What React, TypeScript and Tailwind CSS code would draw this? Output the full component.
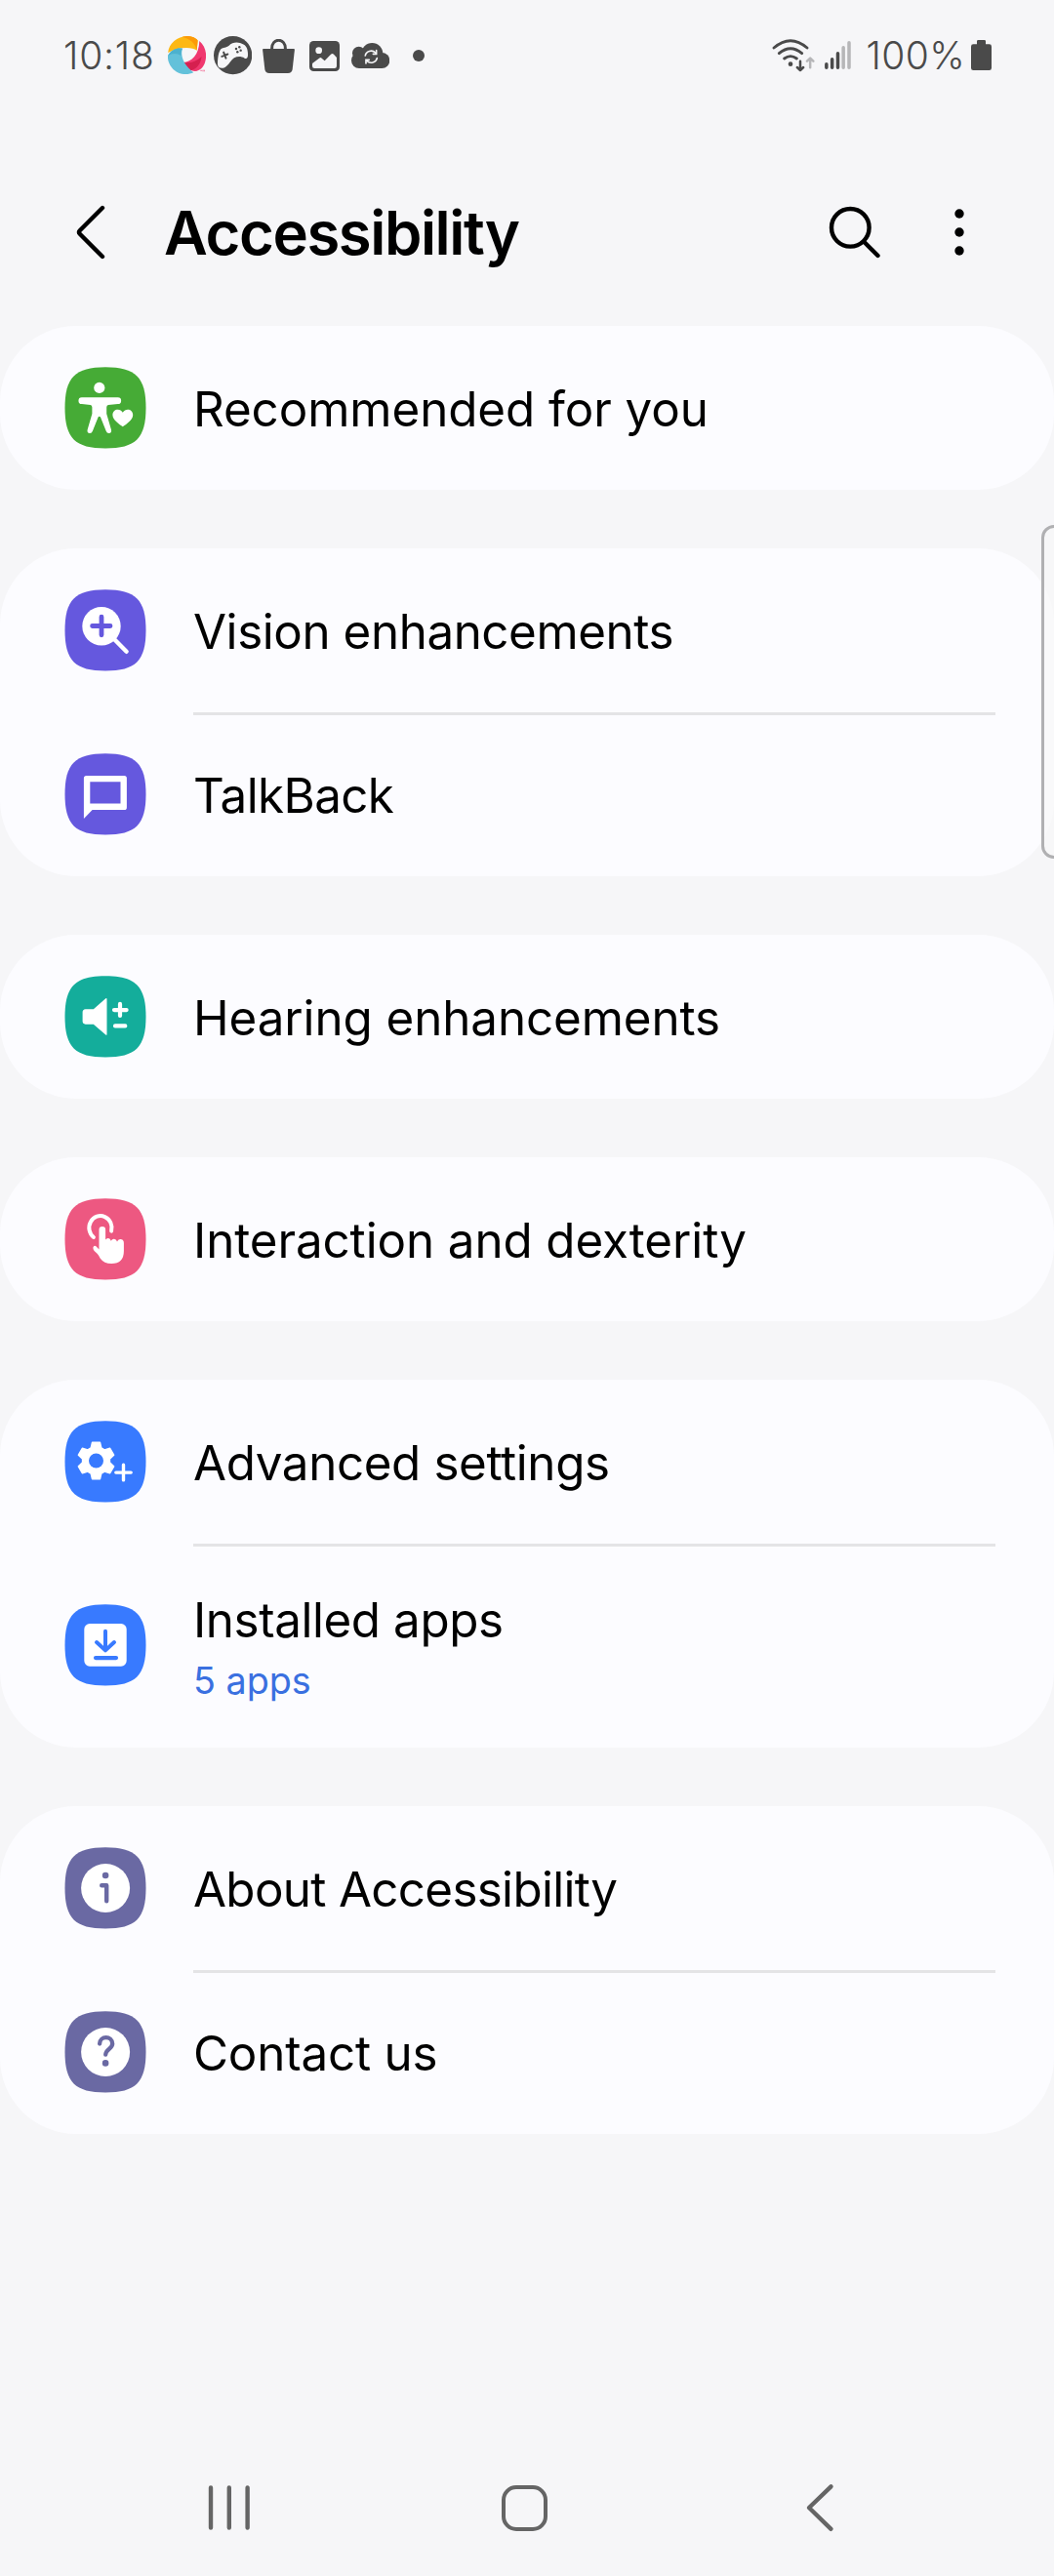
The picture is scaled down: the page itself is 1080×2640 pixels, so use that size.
import React from "react";
import type { ReactNode } from "react";

const BG = "#f6f6f8";
const INK = "#4a4a4a";

type Item = { label: string; tracking: string; color: string; glyph: ReactNode; sub?: string };

function gearPath(cx: number, cy: number) {
  const pts: string[] = [];
  for (let i = 0; i < 6; i++) {
    for (const [a, r] of [[-22, 14], [-12, 19], [12, 19], [22, 14]]) {
      const t = ((i * 60 + a - 90) * Math.PI) / 180;
      pts.push(`${(cx + r * Math.cos(t)).toFixed(2)} ${(cy + r * Math.sin(t)).toFixed(2)}`);
    }
  }
  return `M${pts.join("L")}Z`;
}

function Tile({ color, children }: { color: string; children: ReactNode }) {
  return (
    <svg viewBox="0 0 84 84" className="h-[84px] w-[84px] shrink-0" fill="none" strokeLinecap="round" strokeLinejoin="round">
      <path d="M42 .3C73 .3 83.5 11 83.5 42S73 83.5 42 83.5 .5 73 .5 42 11 .3 42 .3Z" fill={color} />
      {children}
    </svg>
  );
}

const recommended = (
  <g fill="#fff">
    <circle cx="35.8" cy="21.4" r="5.6" />
    <path d="M17.8 31.3H54.8a3.35 3.35 0 0 1 0 6.7L45 38.9Q43.2 39.3 43.2 41.5V48L48 64.4Q48.6 67.8 45.7 68.1Q43.6 68.2 42.7 65.8L37 51.6Q35.8 50 34.6 51.6L28.9 65.8Q28 68.2 25.9 68.1Q23 67.8 23.6 64.4L28.4 48V41.5Q28.4 39.3 26.6 38.9L17.8 38a3.35 3.35 0 0 1 0-6.7Z" />
    <path d="M59.8 61.3C56.5 59 49.4 54.5 49.4 49.3C49.4 43 57 41.8 59.8 46.8C62.6 41.8 70.2 43 70.2 49.3C70.2 54.5 63.1 59 59.8 61.3Z" />
  </g>
);
const vision = (
  <>
    <circle cx="38" cy="37.7" r="19.7" fill="#fff" />
    <path d="M28.6 37.5H47M38 28.2V46.8" stroke="#6558de" strokeWidth="4.8" />
    <path d="M50 50L63.6 63.8" stroke="#fff" strokeWidth="4.4" />
  </>
);
const talkback = (
  <path fillRule="evenodd" fill="#fff" d="M22.5 23H61.3Q63.9 23 63.9 25.6V55.4Q63.9 58 61.3 58H28.6L19.9 67V25.6Q19.9 23 22.5 23ZM26.3 29.3V51.4H57.5V29.3Z" />
);
const hearing = (
  <>
    <path fill="#fff" d="M21.6 34.3H29.8L42.3 23.3Q43.5 22.5 43.5 24V60Q43.5 61.4 42.3 60.5L29.8 49.7H21.6Q18.6 49.5 18.6 46.6V37.4Q18.6 34.5 21.6 34.3Z" />
    <path d="M51 35.1H63.6M57 28.9V41M52 51.4H62.3" stroke="#fff" strokeWidth="4.2" />
  </>
);
const interaction = (
  <>
    <path d="M29.9 40A11.6 12.2 0 1 1 48.1 33.6" stroke="#fff" strokeWidth="4" />
    <path fill="#fff" d="M35.5 32.2a3.3 3.3 0 0 1 6.6 0V42.6Q43.2 40.9 45 41.1Q47 41.4 47.7 43.8Q49 41.6 51 41.8Q53.2 42.1 54 44.4Q55.3 41.9 57.7 42.1Q60.9 42.5 60.9 46V54Q60.9 67 48.2 67Q40.5 67 36.6 61.5C35 57.8 32.8 55.8 30.6 54Q28.9 51.6 29.6 49.9Q30.7 48.2 32.4 49.3L35.5 52.6Z" />
  </>
);
const advanced = (
  <>
    <path fillRule="evenodd" fill="#fff" stroke="#fff" strokeWidth="1.6" d={gearPath(32.5, 41)} />
    <circle cx="32.5" cy="41" r="7.5" fill="#387aff" />
    <path d="M52.8 53.1H68.2M60.5 45.3V60.9" stroke="#fff" strokeWidth="3.4" />
  </>
);
const installed = (
  <>
    <rect x="20.3" y="20.1" width="43.4" height="43.6" rx="5.6" fill="#fff" />
    <path d="M42 27.8V46M33 39L42 47.4L51 39" stroke="#387aff" strokeWidth="4" />
    <path d="M32 55.1H53" stroke="#387aff" strokeWidth="4.2" />
  </>
);
const about = (
  <>
    <circle cx="42.1" cy="42" r="25" fill="#fff" />
    <circle cx="42.1" cy="29" r="3.3" fill="#6a69a3" />
    <path d="M38.2 39.2H43.2V55.2" stroke="#6a69a3" strokeWidth="4.4" />
  </>
);
const contact = (
  <>
    <circle cx="42.1" cy="42" r="25" fill="#fff" />
    <path d="M36.1 33.6C36.1 25 49.2 25 49.2 33.6C49.2 38.6 42.5 39.2 42.2 44.6" stroke="#6a69a3" strokeWidth="4.3" />
    <circle cx="42.1" cy="53.4" r="3.3" fill="#6a69a3" />
  </>
);

const groups: Item[][] = [
  [{ label: "Recommended for you", tracking: "tracking-[-0.06px]", color: "#46ab36", glyph: recommended }],
  [
    { label: "Vision enhancements", tracking: "tracking-[-0.41px]", color: "#6558de", glyph: vision },
    { label: "TalkBack", tracking: "tracking-[-0.6px]", color: "#6558de", glyph: talkback },
  ],
  [{ label: "Hearing enhancements", tracking: "tracking-[-0.07px]", color: "#14ad9b", glyph: hearing }],
  [{ label: "Interaction and dexterity", tracking: "tracking-[-0.08px]", color: "#ed5881", glyph: interaction }],
  [
    { label: "Advanced settings", tracking: "tracking-[-0.36px]", color: "#387aff", glyph: advanced },
    { label: "Installed apps", tracking: "tracking-[-0.4px]", color: "#387aff", glyph: installed, sub: "5 apps" },
  ],
  [
    { label: "About Accessibility", tracking: "tracking-[-0.66px]", color: "#6a69a3", glyph: about },
    { label: "Contact us", tracking: "tracking-[-0.16px]", color: "#6a69a3", glyph: contact },
  ],
];

function Row({ item }: { item: Item }) {
  return (
    <div className={`flex items-center pl-[66px] ${item.sub ? "h-[209px] pb-px" : "h-[168px]"}`}>
      <Tile color={item.color}>{item.glyph}</Tile>
      <div className={`ml-[48px] ${item.sub ? "pt-[3px]" : "pt-[2px]"}`}>
        <div className={`text-[49.3px] leading-[68px] whitespace-nowrap text-black ${item.tracking}`}>{item.label}</div>
        {item.sub && <div className="text-[37.7px] leading-[56px] text-[#3a70e0]">{item.sub}</div>}
      </div>
    </div>
  );
}

function StatusBar() {
  return (
    <div className="flex h-[114px] items-center justify-between pr-[64px] pl-[65px] text-[39px] text-[#4a4a4a]">
      <div className="flex items-center">
        <span className="w-[107px] font-[350] tracking-[0.8px] whitespace-nowrap">10:18</span>
        <svg viewBox="396 53 118 118" className="h-[39.3px] w-[39.3px]">
          <path fill="#fdb813" d="M396.500 104C399 75 425 53.500 455 53.500C470 53.500 482 58 488 66L485 97C470 85 430 85 396.500 104Z" />
          <path fill="#fc9a08" d="M440 55C462 50 482 57 488 67L485 97C482 76 464 61 440 55Z" />
          <path fill="#f0386f" d="M493 68C512 84 518 110 510 135C505 149 495 160 480 161C465 160 450 150 443 134C470 132 492 110 493 68Z" />
          <path fill="#d5204f" d="M443 134C463 138 483 132 500 116C497 138 487 152 467 159C456 152 447 144 443 134Z" />
          <path fill="#63c1da" d="M396 114C404 95 425 88 441 91C433 112 445 143 475 165C455 175 425 172 408 150C399 138 395 126 396 114Z" />
          <path fill="#4cb1ce" d="M396 114C404 95 425 88 441 91C437 98 436 106 437 114C424 104 409 105 396 114Z" />
          <path d="M496 159h5M504 157v5M508 157v5" stroke="#f0386f" strokeWidth="2" />
        </svg>
        <svg viewBox="537 53 118 118" className="ml-[7.7px] h-[39.3px] w-[39.3px]">
          <circle cx="596" cy="112" r="59" fill={INK} />
          <path fill={BG} d="M549 140C549 120 552 101 559 93C566 86 575 90 584 82C592 74 605 70 618 74C634 79 641 86 642 105C643 119 640 125 632 121C622 115 610 115 600 120C590 126 585 141 572 149C561 154 550 152 549 140Z" />
          <path d="M562 115.500L580 108.500M567.500 103L574.500 121" stroke={INK} strokeWidth="6" strokeLinecap="round" />
          <g fill={INK}><circle cx="616" cy="87" r="3.600" /><circle cx="606" cy="92" r="3.600" /><circle cx="620" cy="97" r="3.600" /><circle cx="610" cy="102" r="3.600" /></g>
        </svg>
        <svg viewBox="687 60 99 105" className="ml-[10.7px] h-[35px] w-[33px]">
          <path fill={INK} d="M690 90H783Q786 90 785.700 93L779 153Q777 165 765 165H708Q696 165 694 153L687.300 93Q687 90 690 90Z" />
          <path d="M716 92C713 54.500 760 54.500 757 92" fill="none" stroke={INK} strokeWidth="9" />
        </svg>
        <svg viewBox="831 66 93 93" className="ml-[15px] h-[31px] w-[31px]">
          <rect x="831" y="66" width="93" height="93" rx="13" fill={INK} />
          <circle cx="860" cy="95" r="10" fill={BG} />
          <path fill={BG} d="M841 134L862 118.500Q866 116 869 119L878 127L897 107Q902 103 906 107L915 117V143Q915 150 908 150H847Q840 150 840 143V137Q840 135 841 134Z" />
        </svg>
        <svg viewBox="960 72 118 78" className="ml-[12px] h-[26px] w-[39.3px]">
          <g fill={INK}>
            <circle cx="984" cy="126" r="24" /><circle cx="983" cy="103" r="20" /><circle cx="1024" cy="105" r="33" /><circle cx="1054" cy="126" r="24" />
            <rect x="984" y="105" width="70" height="45" />
          </g>
          <g fill="none" stroke={BG} strokeWidth="5" strokeLinecap="round">
            <path d="M1003 111C1005 97 1024 92 1034 102M1039 119C1036 133 1018 137 1008 127" />
            <path d="M1037 95V106H1027M1005 135V124H1015" />
          </g>
        </svg>
        <span className="ml-[24px] h-[12px] w-[12px] rounded-full bg-[#4a4a4a]" />
      </div>
      <div className="flex items-center">
        <svg viewBox="91 59 132 102" className="h-[34px] w-[44px]" fill="none" stroke={INK} strokeLinecap="round">
          <path d="M97 86Q148 42 199 86M113 103Q148 73 183 103M129 119Q148 105 167 119" strokeWidth="8.500" />
          <circle cx="148" cy="136" r="7" fill={INK} stroke="none" />
          <path d="M178 127V154M168.500 146L178 155L187.500 146" strokeWidth="7.500" strokeLinejoin="round" />
          <path d="M208.500 147V119M199 127L208.500 118L218 127" stroke="#b6b6b8" strokeWidth="7.500" strokeLinejoin="round" />
        </svg>
        <svg viewBox="252 60 81 102" className="ml-[9.700px] h-[34px] w-[27px]" strokeWidth="10.500" strokeLinecap="round">
          <path d="M257.500 137V148M275 122V148M292.500 104V148" stroke={INK} />
          <path d="M309.500 86V148M327 71V148" stroke="#b6b6b8" />
        </svg>
        <span className="ml-[16px] w-[107.500px] font-[350] tracking-[0.4px]">100%</span>
        <svg viewBox="705 63 63 93" className="mt-[-2px] h-[31px] w-[21px]">
          <path fill={INK} d="M727 63H746Q750 63 750 67V76H761Q768 76 768 83V149Q768 156 761 156H712Q705 156 705 149V83Q705 76 712 76H723V67Q723 63 727 63Z" />
        </svg>
      </div>
    </div>
  );
}

function Header() {
  return (
    <header className="mt-[28px] flex h-[192px] items-center pr-[92px] pl-[78px]">
      <svg viewBox="0 0 30 56" className="h-[56px] w-[30px]" fill="none" stroke="#000" strokeWidth="4.400" strokeLinecap="round" strokeLinejoin="round">
        <path d="M27 3L3.800 26.200Q2 28 3.800 29.800L27 53" />
      </svg>
      <h1 className="ml-[60px] flex-1 pt-[2px] text-[61.6px] leading-[76px] font-semibold tracking-[-1.42px] text-black">Accessibility</h1>
      <svg viewBox="0 0 54 54" className="h-[54px] w-[54px]" fill="none" stroke="#000" strokeWidth="4.400" strokeLinecap="round">
        <circle cx="22.300" cy="22.300" r="19.300" />
        <path d="M36 36.500L50.500 51" />
      </svg>
      <svg viewBox="0 0 10 48" className="ml-[75px] h-[48px] w-[10px]">
        <circle cx="5" cy="5" r="4.700" /><circle cx="5" cy="24" r="4.700" /><circle cx="5" cy="43" r="4.700" />
      </svg>
    </header>
  );
}

export default function App() {
  return (
    <div className="relative flex h-[2640px] w-[1080px] flex-col overflow-hidden bg-[#f6f6f8] font-['Inter',sans-serif]">
      <StatusBar />
      <Header />
      <main className="flex flex-col gap-[60px]">
        {groups.map((items) => (
          <section key={items[0].label} className="rounded-[78px] bg-[#fcfcff]">
            {items.map((item, i) => (
              <React.Fragment key={item.label}>
                {i > 0 && <div className="mr-[60px] -mb-[3px] ml-[198px] h-[3px] bg-[#e4e4e6]" />}
                <Row item={item} />
              </React.Fragment>
            ))}
          </section>
        ))}
      </main>
      <nav className="mt-auto mb-[44px] flex h-[52px] items-center pl-[213px]">
        <svg viewBox="0 0 44 52" className="h-[52px] w-[44px]" stroke="#656565" strokeWidth="4.400" strokeLinecap="round">
          <path d="M3 5.500V46.500M21.800 5.500V46.500M40.600 5.500V46.500" />
        </svg>
        <div className="ml-[256.500px] h-[47px] w-[47px] rounded-[15px] border-4 border-[#656565]" />
        <svg viewBox="0 0 30 52" className="ml-[264px] h-[52px] w-[30px]" fill="none" stroke="#656565" strokeWidth="4.400" strokeLinecap="round" strokeLinejoin="round">
          <path d="M26.500 4.300L4 26L26.500 47.800" />
        </svg>
      </nav>
      <div className="absolute top-[538px] right-[-20px] h-[342px] w-[33px] rounded-[13px] border-[3px] border-[#b0b0b2] bg-[#f8f8f8]/70" />
    </div>
  );
}
